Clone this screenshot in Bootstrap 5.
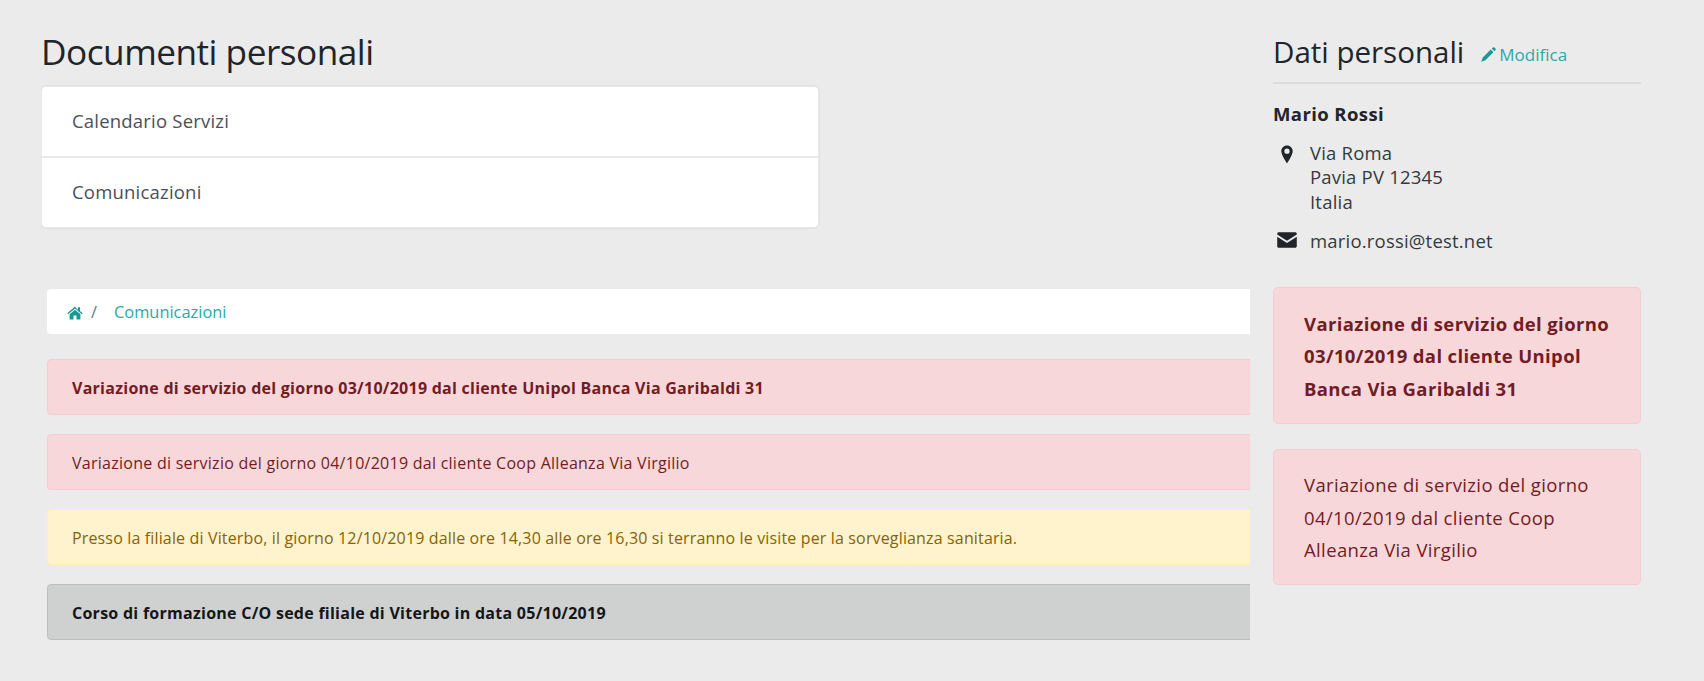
<!DOCTYPE html>
<html>
<head>
    <meta charset="UTF-8">
    <title>Documenti personali</title>
    <link href="https://cdn.jsdelivr.net/npm/bootstrap@5.3.0/dist/css/bootstrap.min.css" rel="stylesheet">
    <style>
        body {
            background-color: #ebebeb;
            font-family: "Open Sans", "Liberation Sans", sans-serif;
            color: #212529;
            height: 681px;
            overflow: hidden;
        }
        a { color: #2aa9a9; text-decoration: none; }
        .page-wrap { padding: 28px 63px 0 41px; gap: 23px; }
        .left-side { width: 1209px; flex: none; overflow: hidden; }
        .right-side { flex: 1 1 auto; min-width: 0; }
        .page-title { font-size: 35.2px; font-weight: 400; line-height: 46px; letter-spacing: -.5px; margin-bottom: 12px; }
        .doc-list { width: 778px; border-radius: 5px; box-shadow: 0 0 2px rgba(0, 0, 0, .12); }
        .doc-list .list-group-item {
            height: 70.5px;
            padding: 0 30px;
            display: flex;
            align-items: center;
            font-size: 18.5px;
            letter-spacing: .2px;
            color: #495057;
            border-color: #e8e8e8;
        }
        .doc-list .list-group-item:first-child { height: 71.5px; border-bottom-width: 2px; }
        .feed { margin: 61px -10px 0 6px; }
        .crumbs {
            height: 45px;
            align-items: center;
            padding: 0 20px;
            margin-bottom: 25px;
            background: #fff;
            border-radius: 4px;
            font-size: 16.4px;
            --bs-breadcrumb-divider-color: #6c757d;
            --bs-breadcrumb-item-padding-x: 8px;
        }
        .crumbs .breadcrumb-item { line-height: 20px; padding-top: 1px; }
        .crumbs .breadcrumb-item + .breadcrumb-item::before { padding-right: 17px; }
        .crumbs svg { width: 16px; height: 14px; display: block; margin-top: 2px; fill: #179a94; }
        .note {
            height: 56px;
            display: flex;
            align-items: center;
            padding: 2px 24px 0;
            margin-bottom: 19px;
            font-size: 16px;
            letter-spacing: .26px;
            border-radius: 4px;
        }
        .note-danger, .side-note { background: #f8d7da; border-color: #f5ccd1; color: #721c24; }
        .note-warning { background: #fff3cd; border-color: #ffeeba; color: #856404; letter-spacing: .15px; }
        .note-grey { background: #cfd1d1; border-color: #bdbfbf; color: #141618; }
        .strong-text { font-weight: 700; }
        .side-head { border-bottom: 2px solid #dcdcdc; padding-bottom: 6px; margin-bottom: 18px; gap: 16px; height: 56px; }
        .side-title { font-size: 29.5px; font-weight: 400; line-height: 38px; margin: 0; }
        .edit-link { font-size: 17px; gap: 3px; padding-top: 6px; }
        .edit-link svg { width: 16px; height: 16px; fill: #179a94; }
        .person-name { font-size: 18.5px; font-weight: 700; letter-spacing: .4px; line-height: 24px; margin-bottom: 14.5px; }
        .contact-row { gap: 13px; font-size: 18.5px; letter-spacing: .2px; line-height: 24.5px; color: #343a40; padding-left: 4px; margin-bottom: 15px; }
        .contact-row svg { width: 20px; flex: none; fill: #212529; }
        .contact-row .pin-icon { height: 19px; margin-top: 4px; }
        .contact-row .mail-icon { height: 18px; margin-top: 2px; }
        .contact-last { margin-bottom: 33.5px; }
        .side-note {
            padding: 19.5px 30px 17.5px;
            margin-bottom: 25px;
            font-size: 18.5px;
            letter-spacing: .37px;
            line-height: 32.5px;
            border-radius: 5px;
        }
    </style>
</head>
<body>
<div class="page-wrap d-flex align-items-start">
    <div class="left-side">
        <h1 class="page-title">Documenti personali</h1>
        <div class="list-group doc-list">
            <a class="list-group-item" href="#">Calendario Servizi</a>
            <a class="list-group-item" href="#">Comunicazioni</a>
        </div>
        <div class="feed">
            <ol class="breadcrumb crumbs">
                <li class="breadcrumb-item">
                    <a href="#" aria-label="Home">
                        <svg viewBox="0 0 16 14"><path d="M8 0.6 0.3 7.2l0.9 1L8 2.5l6.8 5.7 0.9-1-2.7-2.3V1.2h-2.2v2.7z"/><path d="M8 3.7 2.6 8.2V13.6h3.9V9.6h3V13.6h3.9V8.2z"/></svg>
                    </a>
                </li>
                <li class="breadcrumb-item"><a href="#">Comunicazioni</a></li>
            </ol>
            <div class="alert note note-danger strong-text" role="alert">Variazione di servizio del giorno 03/10/2019 dal cliente Unipol Banca Via Garibaldi 31</div>
            <div class="alert note note-danger" role="alert">Variazione di servizio del giorno 04/10/2019 dal cliente Coop Alleanza Via Virgilio</div>
            <div class="alert note note-warning" role="alert">Presso la filiale di Viterbo, il giorno 12/10/2019 dalle ore 14,30 alle ore 16,30 si terranno le visite per la sorveglianza sanitaria.</div>
            <div class="alert note note-grey strong-text" role="alert">Corso di formazione C/O sede filiale di Viterbo in data 05/10/2019</div>
        </div>
    </div>
    <div class="right-side">
        <div class="side-head d-flex align-items-center">
            <h2 class="side-title">Dati personali</h2>
            <a class="edit-link d-flex align-items-center" href="#">
                <svg viewBox="0 0 16 16"><path d="M10.8 2.6 13.4 5.2 5.4 13.2 1.2 14.8 2.8 10.6z"/><path d="M11.8 1.6 13 .5c.4-.4 1-.4 1.4 0l1.1 1.1c.4.4.4 1 0 1.4l-1.2 1.2z"/></svg>
                Modifica
            </a>
        </div>
        <div class="person-name">Mario Rossi</div>
        <div class="contact-row d-flex">
            <svg class="pin-icon" viewBox="0 0 18 18"><path fill-rule="evenodd" d="M9 0.5C5.9 0.5 3.6 2.9 3.6 5.9 3.6 9.2 9 17.5 9 17.5s5.4-8.3 5.4-11.6C14.4 2.9 12.1 0.5 9 0.5zM9 8.4A2.5 2.5 0 1 1 9 3.4 2.5 2.5 0 0 1 9 8.4z"/></svg>
            <div>Via Roma<br>Pavia PV 12345<br>Italia</div>
        </div>
        <div class="contact-row contact-last d-flex">
            <svg class="mail-icon" viewBox="0 0 18 16"><path d="M1.6 1h14.8c.8 0 1.4.6 1.4 1.4v.7L9 8.6.2 3.1v-.7C.2 1.6.8 1 1.6 1z"/><path d="M.2 5 9 10.6 17.8 5v8.6c0 .8-.6 1.4-1.4 1.4H1.6c-.8 0-1.4-.6-1.4-1.4z"/></svg>
            <div>mario.rossi@test.net</div>
        </div>
        <div class="alert side-note strong-text" role="alert">Variazione di servizio del giorno 03/10/2019 dal cliente Unipol Banca Via Garibaldi 31</div>
        <div class="alert side-note" role="alert">Variazione di servizio del giorno 04/10/2019 dal cliente Coop Alleanza Via Virgilio</div>
    </div>
</div>
<script src="https://cdn.jsdelivr.net/npm/bootstrap@5.3.0/dist/js/bootstrap.bundle.min.js"></script>
</body>
</html>
